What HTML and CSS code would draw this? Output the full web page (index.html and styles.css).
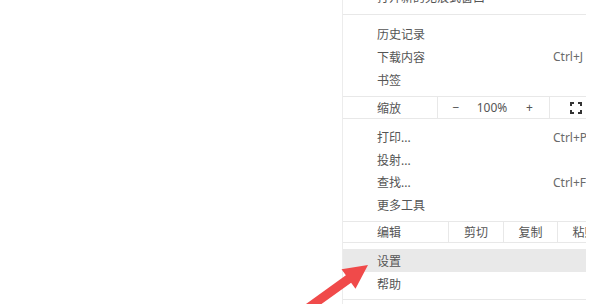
FILE: index.html
```html
<!DOCTYPE html>
<html lang="zh">
<head>
<meta charset="utf-8">
<link rel="stylesheet" href="styles.css">
</head>
<body>
<div class="page">
  <div class="menu">
    <div class="sec sec-top">
      <div class="item"><span class="label">打开新的无痕式窗口</span></div>
    </div>
    <div class="sec sec-a">
      <div class="item"><span class="label">历史记录</span></div>
      <div class="item"><span class="label">下载内容</span><span class="key">Ctrl+J</span></div>
      <div class="item"><span class="label">书签</span></div>
    </div>
    <div class="sec zoom-row">
      <div class="cell cell-zoom-label">缩放</div>
      <div class="cell cell-zoom-ctrl">
        <span class="zc">−</span>
        <span class="zc">100%</span>
        <span class="zc">+</span>
      </div>
      <div class="cell cell-full">
        <svg width="12" height="12" viewBox="0 0 12 12" fill="none" stroke="#333333" stroke-width="2">
          <path d="M1 4V1H4M8 1H11V4M11 8V11H8M4 11H1V8"/>
        </svg>
      </div>
    </div>
    <div class="sec sec-b">
      <div class="item item-s"><span class="label">打印...</span><span class="key">Ctrl+P</span></div>
      <div class="item item-s"><span class="label">投射...</span></div>
      <div class="item item-s"><span class="label">查找...</span><span class="key">Ctrl+F</span></div>
      <div class="item item-s"><span class="label">更多工具</span></div>
    </div>
    <div class="sec edit-row">
      <div class="cell cell-edit-label">编辑</div>
      <div class="cell cell-cut">剪切</div>
      <div class="cell cell-copy">复制</div>
      <div class="cell cell-paste">粘贴</div>
    </div>
    <div class="sec sec-c">
      <div class="item item-hover"><span class="label">设置</span></div>
      <div class="item"><span class="label">帮助</span></div>
    </div>
  </div>
</div>
<svg class="arrow" width="610" height="304" viewBox="0 0 610 304">
  <polygon fill="#f04a4a" points="368,265 355.5,288.75 351.1,282.7 310.5,311.9 305.3,304.5 345.9,275.3 341.5,269.25"/>
</svg>
</body>
</html>
```

FILE: styles.css
```css
html, body {
  margin: 0;
  padding: 0;
  background: #ffffff;
  overflow: hidden;
}

body {
  width: 610px;
  height: 304px;
  position: relative;
  font-family: "Noto Sans", "Noto Sans CJK SC", sans-serif;
  font-size: 12px;
  color: #555555;
}

.page {
  display: flex;
  padding-left: 342px;
  height: 304px;
}

.menu {
  width: 243px;
  margin-top: -15px;
  border-left: 1px solid #ececec;
  overflow: hidden;
  flex-shrink: 0;
  height: 330px;
}

.sec {
  border-bottom: 1px solid #e8e8e8;
  width: 300px;
}

.sec-top {
  padding-bottom: 6px;
}

.sec-a {
  padding: 7px 0 5px;
}

.sec-b {
  padding: 7px 0 5px;
}

.sec-c {
  padding: 6px 0 4px;
}

.item {
  display: flex;
  align-items: center;
  height: 23px;
  padding-left: 34px;
  white-space: nowrap;
}

.item-s {
  height: 22.5px;
}

.item-hover {
  background: #e9e9e9;
}

.label {
  width: 176px;
  flex-shrink: 0;
}

.key {
  color: #6a6a6a;
}

.zoom-row,
.edit-row {
  display: flex;
  align-items: stretch;
  white-space: nowrap;
}

.zoom-row {
  height: 21px;
}

.edit-row {
  height: 20px;
}

.cell {
  box-sizing: border-box;
  flex-shrink: 0;
  display: flex;
  align-items: center;
}

.cell-zoom-label {
  width: 95px;
  padding-left: 34px;
  border-right: 1px solid #e8e8e8;
}

.cell-zoom-ctrl {
  width: 112px;
  display: grid;
  grid-template-columns: 36px 36px 39px;
  align-items: center;
  border-right: 1px solid #e8e8e8;
}

.zc {
  text-align: center;
}

.cell-full {
  padding-left: 20px;
}

.cell-full svg {
  display: block;
}

.cell-edit-label {
  width: 106px;
  padding-left: 34px;
  border-right: 1px solid #e8e8e8;
}

.cell-cut,
.cell-copy,
.cell-paste {
  justify-content: center;
  border-right: 1px solid #e8e8e8;
}

.cell-cut {
  width: 55px;
}

.cell-copy {
  width: 54px;
}

.cell-paste {
  width: 54px;
}

.arrow {
  position: absolute;
  left: 0;
  top: 0;
  pointer-events: none;
}
```
